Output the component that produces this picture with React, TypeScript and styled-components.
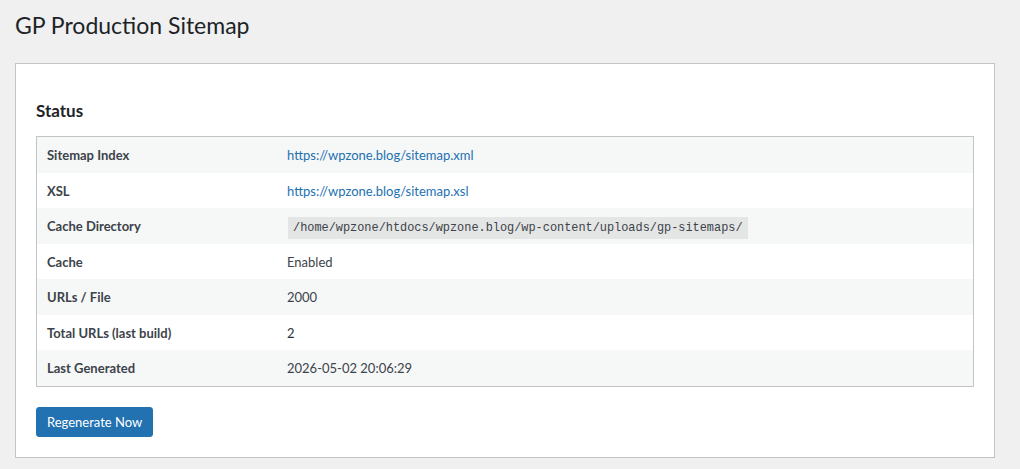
import styled, { createGlobalStyle } from "styled-components";

const GlobalStyle = createGlobalStyle`
  html, body {
    margin: 0;
    padding: 0;
    background: #f0f0f1;
  }
  body {
    font-family: Lato, "Noto Sans", sans-serif;
    font-size: 13px;
    color: #3c434a;
  }
`;

type Row = {
  label: string;
  value: string;
  kind?: "link" | "code" | "text" | "num";
};

const rows: Row[] = [
  { label: "Sitemap Index", value: "https://wpzone.blog/sitemap.xml", kind: "link" },
  { label: "XSL", value: "https://wpzone.blog/sitemap.xsl", kind: "link" },
  {
    label: "Cache Directory",
    value: "/home/wpzone/htdocs/wpzone.blog/wp-content/uploads/gp-sitemaps/",
    kind: "code",
  },
  { label: "Cache", value: "Enabled" },
  { label: "URLs / File", value: "2000" },
  { label: "Total URLs (last build)", value: "2", kind: "num" },
  { label: "Last Generated", value: "2026-05-02 20:06:29" },
];

export default function App() {
  const renderValue = (row: Row) => {
    if (row.kind === "link") return <Link href="#">{row.value}</Link>;
    if (row.kind === "code") return <Code>{row.value}</Code>;
    if (row.kind === "num") return <Num>{row.value}</Num>;
    return row.value;
  };

  return (
    <Wrap>
      <GlobalStyle />
      <Title>GP Production Sitemap</Title>
      <Card>
        <Heading>Status</Heading>
        <Table>
          <tbody>
            {rows.map((row, i) => (
              <Tr key={row.label} $striped={i % 2 === 0}>
                <Th>{row.label}</Th>
                <Td>{renderValue(row)}</Td>
              </Tr>
            ))}
          </tbody>
        </Table>
        <Button type="button">Regenerate Now</Button>
      </Card>
    </Wrap>
  );
}

const Wrap = styled.div`
  display: flex;
  flex-direction: column;
  padding: 0 25px 0 15px;
`;

const Title = styled.h1`
  margin: 0;
  padding: 11px 0 2px;
  font-size: 23px;
  font-weight: 400;
  line-height: 29px;
  color: #1d2327;
`;

const Card = styled.div`
  margin-top: 21px;
  background: #fff;
  border: 1px solid #c3c4c7;
  padding: 20px;
  display: flex;
  flex-direction: column;
  align-items: flex-start;
`;

const Heading = styled.h2`
  margin: 16px 0 14px;
  font-size: 17px;
  font-weight: 700;
  line-height: 22px;
  color: #1d2327;
`;

const Table = styled.table`
  width: 100%;
  border: 1px solid #c3c4c7;
  border-spacing: 0;
  border-collapse: separate;
  margin-bottom: 20px;
`;

const Tr = styled.tr<{ $striped: boolean }>`
  background: ${(p) => (p.$striped ? "#f6f7f7" : "#fff")};
`;

const Th = styled.th`
  width: 220px;
  text-align: left;
  font-weight: 700;
  color: #3c434a;
  padding: 9px 10px 7px;
  line-height: 19.5px;
`;

const Td = styled.td`
  padding: 9px 10px 7px;
  line-height: 19.5px;
  color: #3c434a;
`;

const Link = styled.a`
  color: #2271b1;
  text-decoration: none;
`;

const Num = styled.span`
  color: #2c3338;
`;

const Code = styled.code`
  font-family: "Liberation Mono", "DejaVu Sans Mono", monospace;
  font-size: 11.9px;
  line-height: 1;
  background: rgba(0, 0, 0, 0.07);
  padding: 4px 5px 4px;
  margin: 0 1px;
  color: #3c434a;
`;

const Button = styled.button`
  background: #2271b1;
  border: 1px solid #2271b1;
  border-radius: 3px;
  color: #fff;
  font-family: Lato, "Noto Sans", sans-serif;
  font-size: 13px;
  line-height: 26px;
  min-height: 30px;
  padding: 0 10px;
  cursor: pointer;
`;
